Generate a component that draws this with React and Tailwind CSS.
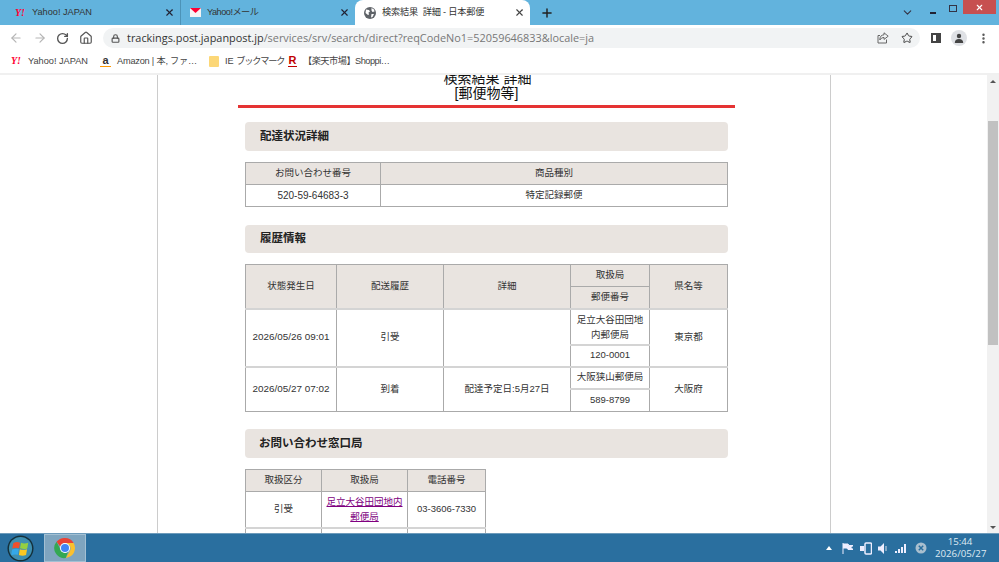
import React from "react";
import { ArrowLeft, ArrowRight, RotateCw, Home, Lock, Star, Plus, X, ChevronDown, MoreVertical } from "lucide-react";

function YahooIcon() {
  return (
    <span className="w-[12px] shrink-0 text-center text-[10px] leading-none font-bold italic text-[#ff0033] [font-family:'Liberation_Serif',serif]">
      Y!
    </span>
  );
}

function MailIcon() {
  return (
    <svg width="11" height="9" viewBox="0 0 11 9" className="shrink-0">
      <rect width="11" height="9" fill="#f4f4f4" />
      <path d="M0 0h11L5.5 5z" fill="#ff0033" />
    </svg>
  );
}

function GlobeIcon() {
  return (
    <svg width="12" height="12" viewBox="0 0 12 12" className="shrink-0">
      <circle cx="6" cy="6" r="6" fill="#5f6368" />
      <path d="M2 2.500l3 .500 1 1.500-1.500 1 .5 2-1 .5L1.500 6zM7.500 1l2.500 1.500.5 2-2 .5-1-1.500zM7.500 7h2.500L8.500 10 7 10.500z" fill="#fff" />
    </svg>
  );
}

function ChromeIcon({ size = 24 }) {
  return (
    <svg width={size} height={size} viewBox="0 0 48 48">
      <path d="M24 4a20 20 0 0 1 17.3 10H24a10 10 0 0 0-9.6 7.2L7.100 11.600A20 20 0 0 1 24 4z" fill="#ea4335" />
      <path d="M41.300 14A20 20 0 0 1 25.600 44l8.700-15A10 10 0 0 0 31.600 17.500 10 10 0 0 0 24 14z" fill="#fbc02d" />
      <path d="M25.600 44A20 20 0 0 1 7.100 11.600l8.700 17.400A10 10 0 0 0 30 32z" fill="#34a853" />
      <circle cx="24" cy="24" r="10" fill="#fff" />
      <circle cx="24" cy="24" r="8" fill="#4285f4" />
    </svg>
  );
}

function WindowsOrb() {
  return (
    <svg width="27" height="27" viewBox="0 0 28 28">
      <circle cx="14" cy="14" r="13.500" fill="#14303a" />
      <circle cx="14" cy="14" r="12" fill="#3f8fb0" />
      <path d="M6.500 8.500q3.500-2 7-.5l-1 5.800Q9 12.600 5.500 14z" fill="#f0502c" />
      <path d="M14.500 8q3.500 1.500 7.500 0l-1 6q-3.600 1.200-7.500-.2z" fill="#96d040" />
      <path d="M5.300 15q3.500-1.400 7-.4l-1 6q-3.500-1-7 .4z" fill="#35a8e8" />
      <path d="M13.300 14.800q3.600 1.200 7.500 0l-1 6q-3.600 1.400-7.500 0z" fill="#fcc822" />
    </svg>
  );
}

function Tab({ icon, title, className, titleClass, closeClass }) {
  return (
    <div className={`flex items-center h-[25px] ${className}`}>
      {icon}
      <span className={`flex-1 whitespace-pre text-[9.200px] ml-[6px] ${titleClass}`}>{title}</span>
      <X size={11} strokeWidth={2.5} className={closeClass} />
    </div>
  );
}

function Bookmark({ icon, label, className, labelClass }) {
  return (
    <div className={`flex items-center gap-[6px] shrink-0 text-[9.200px] text-[#444] whitespace-nowrap ${className}`}>
      {icon}
      <span className={labelClass}>{label}</span>
    </div>
  );
}

function SectionTitle({ children, className }) {
  return (
    <h3 className={`flex items-center rounded-[4px] bg-[#e9e4e0] text-[11.500px] font-bold text-[#222] ${className}`}>
      {children}
    </h3>
  );
}

const th = "border border-[#aaa] bg-[#e9e4e0] font-normal";
const td = "border border-[#aaa]";
const bodyTd = "border border-[#aaa] border-t-2 border-t-[#d4d4d4]";

function App() {
  return (
    <div className="flex flex-col w-[999px] h-[562px] overflow-hidden bg-white text-[#333] [font-family:'Liberation_Sans','Noto_Sans_CJK_JP',sans-serif]">
      {/* tab strip */}
      <div className="flex items-center h-[25px] shrink-0 bg-[#62b3dd] text-[#333]">
        <Tab
          icon={<YahooIcon />}
          title="Yahoo! JAPAN"
          className="w-[181px] pl-[14px] pr-[5px] border-r border-[#4c93b8]"
          closeClass="text-[#223]"
        />
        <Tab
          icon={<MailIcon />}
          title="Yahoo!メール"
          titleClass="tracking-[-0.5px]"
          className="w-[174px] pl-[9px] pr-[5px]"
          closeClass="text-[#223]"
        />
        <Tab
          icon={<GlobeIcon />}
          title="検索結果  詳細 - 日本郵便"
          titleClass="tracking-[-0.2px]"
          className="w-[175px] pl-[9px] pr-[5px] bg-white rounded-t-[8px]"
          closeClass="text-[#444]"
        />
        <Plus size={14} strokeWidth={2.5} className="ml-[10px] text-[#222]" />
        <ChevronDown size={13} strokeWidth={2} className="ml-[347px] text-[#334]" />
        <div className="ml-[16px] w-[6px] h-[2px] bg-[#223]" />
        <div className="ml-[13px] mb-[8px] w-[8px] h-[7px] border border-[#334]" />
        <div className="flex items-center justify-center ml-[6px] mb-[11px] w-[33px] h-[14px] bg-[#c75050]">
          <X size={9} strokeWidth={3} className="text-white" />
        </div>
      </div>

      {/* toolbar */}
      <div className="flex items-center h-[25px] shrink-0 pt-[1px] pl-[9px] bg-white">
        <ArrowLeft size={14} className="text-[#b5b5b5]" />
        <ArrowRight size={14} className="ml-[10px] text-[#b5b5b5]" />
        <RotateCw size={13} strokeWidth={2.5} className="ml-[9px] text-[#555]" />
        <Home size={14} strokeWidth={2} className="ml-[10px] text-[#555]" />
        <div className="flex items-center w-[817px] h-[20px] ml-[10px] pl-[8px] rounded-full bg-[#f1f3f4]">
          <Lock size={9} strokeWidth={3} className="text-[#555]" />
          <span className="ml-[7px] flex-1 text-[10.900px] text-[#777] whitespace-nowrap [font-family:'Open_Sans',sans-serif]">
            <span className="text-[#333]">trackings.post.japanpost.jp</span>
            /services/srv/search/direct?reqCodeNo1=52059646833&amp;locale=ja
          </span>
          <svg width="12" height="12" viewBox="0 0 12 12" fill="none" stroke="#666" strokeWidth="1">
            <path d="M7 .800l4.200 3.400L7 7.400V5.400Q4.200 5.400 2.800 8 2.800 3 7 2.800zM9.500 7.500v3.500H1V3.500h2" />
          </svg>
          <Star size={12} strokeWidth={2} className="ml-[12px] mr-[7px] text-[#444]" />
        </div>
        <div className="ml-[11px] w-[10px] h-[10px] border-[2px] border-r-[5px] border-[#444]" />
        <div className="flex items-center justify-center ml-[10px] w-[16px] h-[16px] rounded-full bg-[#dfe1e5]">
          <svg width="10" height="10" viewBox="0 0 10 10">
            <circle cx="5" cy="3" r="2.200" fill="#444" />
            <path d="M0.800 10q0-4 4.200-4t4.200 4z" fill="#444" />
          </svg>
        </div>
        <MoreVertical size={13} strokeWidth={2.5} className="ml-[10px] text-[#555]" />
      </div>

      {/* bookmarks */}
      <div className="flex items-center h-[25px] shrink-0 pl-[10px] bg-white border-b-2 border-[#f0f0f0]">
        <Bookmark icon={<YahooIcon />} label="Yahoo! JAPAN" className="w-[90px]" />
        <Bookmark
          icon={
            <span className="w-[11px] text-center text-[11px] leading-none font-bold text-[#333] border-b border-[#f90]">a</span>
          }
          label="Amazon | 本, ファ…"
          labelClass="tracking-[-0.2px]"
          className="w-[109px]"
        />
        <Bookmark
          icon={<span className="w-[10px] h-[11px] rounded-[1px] bg-[#fcd777]" />}
          label={
            <>
              IE <span className="tracking-[-1.200px]">ブックマーク</span>
            </>
          }
          className="w-[79px]"
        />
        <Bookmark
          icon={<span className="w-[9px] text-center text-[11px] leading-none font-bold text-[#bf0000] border-b border-[#bf0000]">R</span>}
          label="【楽天市場】Shoppi…"
          labelClass="tracking-[-0.5px]"
        />
      </div>

      {/* page */}
      <div className="flex flex-1 min-h-0 overflow-hidden">
        <div className="flex-1 overflow-hidden">
          <div className="ml-[157px] w-[674px] -mt-[4px] pb-[40px] border-x border-[#ccc] text-[9.500px]">
            <div className="ml-[80px] w-[497px] pb-[4px] border-b-[3px] border-[#e53333] text-center text-[14px] leading-[15px] text-[#111]">
              <p className="pl-[2px]">検索結果 詳細</p>
              <p>[郵便物等]</p>
            </div>

            <div className="ml-[87px] w-[483px]">
              <SectionTitle className="h-[29px] mt-[14px] pl-[15px]">配達状況詳細</SectionTitle>
              <table className="w-full mt-[11px] table-fixed border-collapse text-center">
                <colgroup>
                  <col className="w-[135px]" />
                  <col />
                </colgroup>
                <tbody>
                  <tr className="h-[22px]">
                    <th className={th}>お問い合わせ番号</th>
                    <th className={th}>商品種別</th>
                  </tr>
                  <tr className="h-[22px]">
                    <td className={`${td} text-[10px]`}>520-59-64683-3</td>
                    <td className={td}>特定記録郵便</td>
                  </tr>
                </tbody>
              </table>

              <SectionTitle className="h-[28px] mt-[18px] pl-[15px]">履歴情報</SectionTitle>
              <table className="w-full mt-[11px] table-fixed border-collapse text-center">
                <colgroup>
                  <col className="w-[91px]" />
                  <col className="w-[107px]" />
                  <col className="w-[127px]" />
                  <col className="w-[79px]" />
                  <col />
                </colgroup>
                <tbody>
                  <tr className="h-[22px]">
                    <th rowSpan={2} className={th}>状態発生日</th>
                    <th rowSpan={2} className={th}>配送履歴</th>
                    <th rowSpan={2} className={th}>詳細</th>
                    <th className={th}>取扱局</th>
                    <th rowSpan={2} className={th}>県名等</th>
                  </tr>
                  <tr className="h-[22px]">
                    <th className={th}>郵便番号</th>
                  </tr>
                  <tr className="h-[36px]">
                    <td rowSpan={2} className={`${bodyTd} text-[9.900px]`}>2026/05/26 09:01</td>
                    <td rowSpan={2} className={bodyTd}>引受</td>
                    <td rowSpan={2} className={bodyTd}></td>
                    <td className={`${bodyTd} px-[3px] leading-[15px]`}>足立大谷田団地内郵便局</td>
                    <td rowSpan={2} className={bodyTd}>東京都</td>
                  </tr>
                  <tr className="h-[22px]">
                    <td className={bodyTd}>120-0001</td>
                  </tr>
                  <tr className="h-[22px]">
                    <td rowSpan={2} className={`${bodyTd} text-[9.900px]`}>2026/05/27 07:02</td>
                    <td rowSpan={2} className={bodyTd}>到着</td>
                    <td rowSpan={2} className={bodyTd}>配達予定日:5月27日</td>
                    <td className={bodyTd}>大阪狭山郵便局</td>
                    <td rowSpan={2} className={bodyTd}>大阪府</td>
                  </tr>
                  <tr className="h-[23px]">
                    <td className={bodyTd}>589-8799</td>
                  </tr>
                </tbody>
              </table>

              <SectionTitle className="h-[29px] mt-[17px] pl-[14px]">お問い合わせ窓口局</SectionTitle>
              <table className="w-[241px] mt-[11px] table-fixed border-collapse text-center">
                <colgroup>
                  <col className="w-[76px]" />
                  <col className="w-[86px]" />
                  <col />
                </colgroup>
                <tbody>
                  <tr className="h-[22px]">
                    <th className={th}>取扱区分</th>
                    <th className={th}>取扱局</th>
                    <th className={th}>電話番号</th>
                  </tr>
                  <tr className="h-[36px]">
                    <td className={td}>引受</td>
                    <td className={`${td} leading-[15px]`}>
                      <a href="#" className="underline text-[#800080]">足立大谷田団地内郵便局</a>
                    </td>
                    <td className={td}>03-3606-7330</td>
                  </tr>
                  <tr className="h-[36px]">
                    <td className={bodyTd}></td>
                    <td className={bodyTd}></td>
                    <td className={bodyTd}></td>
                  </tr>
                </tbody>
              </table>
            </div>
          </div>
        </div>

        {/* scrollbar */}
        <div className="flex flex-col items-center w-[12px] shrink-0 bg-[#f1f1f1]">
          <span className="mt-[5px] w-0 h-0 border-x-[3px] border-x-transparent border-b-[3px] border-b-[#555]" />
          <div className="mt-[38px] w-[10px] h-[224px] bg-[#c1c1c1]" />
          <span className="mt-auto mb-[4px] w-0 h-0 border-x-[3px] border-x-transparent border-t-[3px] border-t-[#555]" />
        </div>
      </div>

      {/* taskbar */}
      <div className="flex items-center h-[29px] shrink-0 bg-[#2a6f9f] border-t border-[#6d9bbb] text-white">
        <div className="ml-[6px] w-[28px] flex justify-center">
          <WindowsOrb />
        </div>
        <div className="flex items-center justify-center ml-[10px] w-[42px] h-[28px] bg-[#7fa5bf] border border-[#a3c0d3]">
          <ChromeIcon />
        </div>
        <span className="ml-[740px] w-0 h-0 border-x-[3px] border-x-transparent border-b-[4px] border-b-white" />
        <svg width="11" height="11" viewBox="0 0 11 11" className="ml-[10px]">
          <path d="M1 0v11M1 1h5l1 1.500h4l-2 2 2 2H6l-1-1.500H1" fill="#eef" stroke="#eef" strokeWidth="1" />
        </svg>
        <svg width="12" height="13" viewBox="0 0 12 13" className="ml-[7px]">
          <rect x="5" y="1" width="6.500" height="11" rx="1" fill="none" stroke="#eef" strokeWidth="1.500" />
          <rect x="0" y="4" width="4" height="5" fill="#eef" />
        </svg>
        <svg width="10" height="11" viewBox="0 0 10 11" className="ml-[6px]">
          <path d="M0 3.500h2.500L6 0v11L2.500 7.500H0z" fill="#eef" />
          <path d="M8 3v5" stroke="#bcd" strokeWidth="1.200" />
        </svg>
        <svg width="11" height="9" viewBox="0 0 11 9" className="ml-[7px]">
          <path d="M0 7h2v2H0zM3 5h2v4H3zM6 3h2v6H6zM9 0h2v9H9z" fill="#eef" />
        </svg>
        <svg width="12" height="12" viewBox="0 0 12 12" className="ml-[9px]">
          <circle cx="6" cy="6" r="5.500" fill="#a9bfcf" />
          <path d="M3.800 3.800l4.400 4.400M8.200 3.800l-4.400 4.400" stroke="#2a6f9f" strokeWidth="1.500" />
        </svg>
        <div className="ml-[8px] w-[50px] text-center text-[9.700px] leading-[12px] text-[#dfeaf2] [font-family:'Open_Sans',sans-serif] whitespace-nowrap">
          <p>15:44</p>
          <p>2026/05/27</p>
        </div>
      </div>
    </div>
  );
}

export default App;
